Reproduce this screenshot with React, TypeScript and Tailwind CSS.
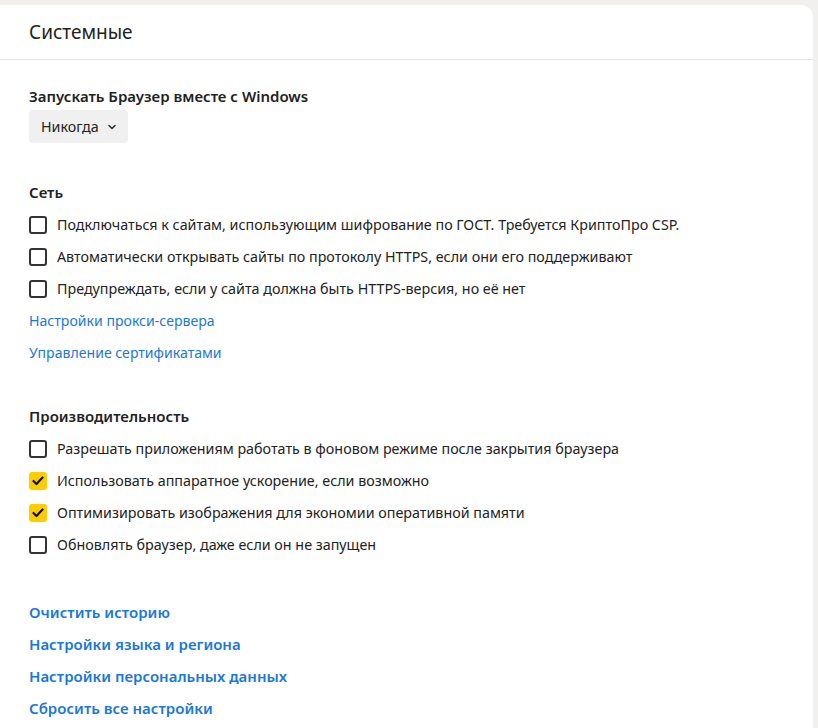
import React from 'react';

const font = { fontFamily: '"Segoe UI", "Noto Sans", "Open Sans", sans-serif' };

const Checkbox: React.FC<{ checked?: boolean }> = ({ checked }) =>
  checked ? (
    <span className="flex h-[18px] w-[18px] shrink-0 items-center justify-center rounded-[3px] bg-[#ffcc00]">
      <svg width="12" height="10" viewBox="0 0 12 10" fill="none">
        <path d="M1.5 5l3 3 6-6.5" stroke="#111" strokeWidth="2.2" strokeLinecap="round" strokeLinejoin="round" />
      </svg>
    </span>
  ) : (
    <span className="h-[18px] w-[18px] shrink-0 rounded-[3px] border-2 border-[#333]" />
  );

const CheckRow: React.FC<{ label: string; checked?: boolean }> = ({ label, checked }) => (
  <label className="flex h-8 items-center gap-[10px] text-[14.3px] text-[#222]">
    <Checkbox checked={checked} />
    <span>{label}</span>
  </label>
);

const LinkRow: React.FC<{ label: string; bold?: boolean }> = ({ label, bold }) => (
  <div className="flex h-8 items-center">
    <a href="#" className={`text-[#1a78d6] ${bold ? 'text-[15px] font-semibold' : 'text-[14.1px]'}`}>
      {label}
    </a>
  </div>
);

const Heading: React.FC<{ children: React.ReactNode }> = ({ children }) => (
  <div className="flex h-[34px] items-center text-[15px] font-semibold text-[#222]">{children}</div>
);

export default function App() {
  return (
    <div className="min-h-[728px] bg-[#f1f0ee] pt-[5px] pr-[5px]" style={font}>
      <div className="min-h-[723px] rounded-tr-[12px] bg-white">
        <div className="flex h-[55px] items-center border-b border-[#e3e3e3] pl-[29px]">
          <h1 className="text-[19px] text-[#222]">Системные</h1>
        </div>

        <div className="pl-[29px] pt-[24px] pb-4">
          <div className="flex h-[25px] items-center text-[15px] font-semibold text-[#222]">
            Запускать Браузер вместе с Windows
          </div>
          <button className="mt-px flex h-[33px] items-center gap-[9px] rounded-[4px] bg-[#f0f0f0] pl-3 pr-3 text-[14.3px] text-[#222]">
            Никогда
            <svg width="8" height="6" viewBox="0 0 8 6" fill="none">
              <path d="M1 1.5l3 3 3-3" stroke="#333" strokeWidth="1.6" strokeLinecap="round" strokeLinejoin="round" />
            </svg>
          </button>

          <div className="mt-[32px]">
            <Heading>Сеть</Heading>
            <CheckRow label="Подключаться к сайтам, использующим шифрование по ГОСТ. Требуется КриптоПро CSP." />
            <CheckRow label="Автоматически открывать сайты по протоколу HTTPS, если они его поддерживают" />
            <CheckRow label="Предупреждать, если у сайта должна быть HTTPS-версия, но её нет" />
            <LinkRow label="Настройки прокси-сервера" />
            <LinkRow label="Управление сертификатами" />
          </div>

          <div className="mt-[30px]">
            <Heading>Производительность</Heading>
            <CheckRow label="Разрешать приложениям работать в фоновом режиме после закрытия браузера" />
            <CheckRow label="Использовать аппаратное ускорение, если возможно" checked />
            <CheckRow label="Оптимизировать изображения для экономии оперативной памяти" checked />
            <CheckRow label="Обновлять браузер, даже если он не запущен" />
          </div>

          <div className="mt-[35px]">
            <LinkRow label="Очистить историю" bold />
            <LinkRow label="Настройки языка и региона" bold />
            <LinkRow label="Настройки персональных данных" bold />
            <LinkRow label="Сбросить все настройки" bold />
          </div>
        </div>
      </div>
    </div>
  );
}
